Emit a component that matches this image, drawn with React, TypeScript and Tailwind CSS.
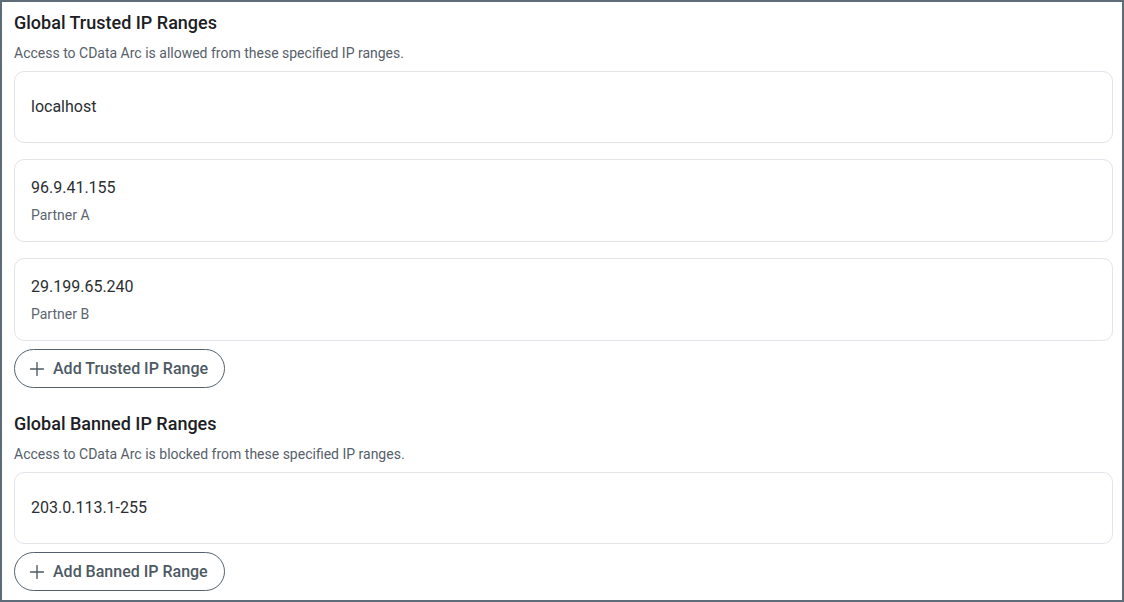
import { Plus } from 'lucide-react';

type IpRange = { ip: string; note?: string };

const trusted: IpRange[] = [
  { ip: 'localhost' },
  { ip: '96.9.41.155', note: 'Partner A' },
  { ip: '29.199.65.240', note: 'Partner B' },
];

const banned: IpRange[] = [{ ip: '203.0.113.1-255' }];

function RangeCard({ range }: { range: IpRange }) {
  if (!range.note) {
    return (
      <div className="flex h-[72px] items-center rounded-[10px] border border-[#e1e4e8] bg-white px-4">
        <span className="text-base leading-6 text-[#2b2f33]">{range.ip}</span>
      </div>
    );
  }
  return (
    <div className="flex h-[83px] flex-col gap-[5px] rounded-[10px] border border-[#e1e4e8] bg-white px-4 pt-4">
      <span className="text-base leading-6 text-[#2b2f33]">{range.ip}</span>
      <span className="text-sm leading-5 text-[#5b6570]">{range.note}</span>
    </div>
  );
}

function Section({ title, description, ranges, action }: { title: string; description: string; ranges: IpRange[]; action: string }) {
  return (
    <section>
      <h2 className="text-lg font-medium leading-6 text-[#1c2024]">{title}</h2>
      <p className="mt-2 text-sm leading-5 text-[#56606a]">{description}</p>
      <div className="mt-2 flex flex-col gap-4">
        {ranges.map((r) => (
          <RangeCard key={r.ip} range={r} />
        ))}
      </div>
      <button
        type="button"
        className="mt-2 flex h-[39px] items-center gap-[5px] rounded-full border border-[#55626d] pl-[11px] pr-4 text-base font-medium text-[#4d5963]"
      >
        <Plus size={22} strokeWidth={1.5} />
        {action}
      </button>
    </section>
  );
}

export default function App() {
  return (
    <div
      className="h-[602px] w-[1124px] overflow-hidden border-2 border-[#5d6c78] bg-white pl-3 pr-[9px] pt-[9px]"
      style={{ fontFamily: 'Roboto, "Liberation Sans", sans-serif' }}
    >
      <div className="flex flex-col gap-6">
        <Section
          title="Global Trusted IP Ranges"
          description="Access to CData Arc is allowed from these specified IP ranges."
          ranges={trusted}
          action="Add Trusted IP Range"
        />
        <Section
          title="Global Banned IP Ranges"
          description="Access to CData Arc is blocked from these specified IP ranges."
          ranges={banned}
          action="Add Banned IP Range"
        />
      </div>
    </div>
  );
}
